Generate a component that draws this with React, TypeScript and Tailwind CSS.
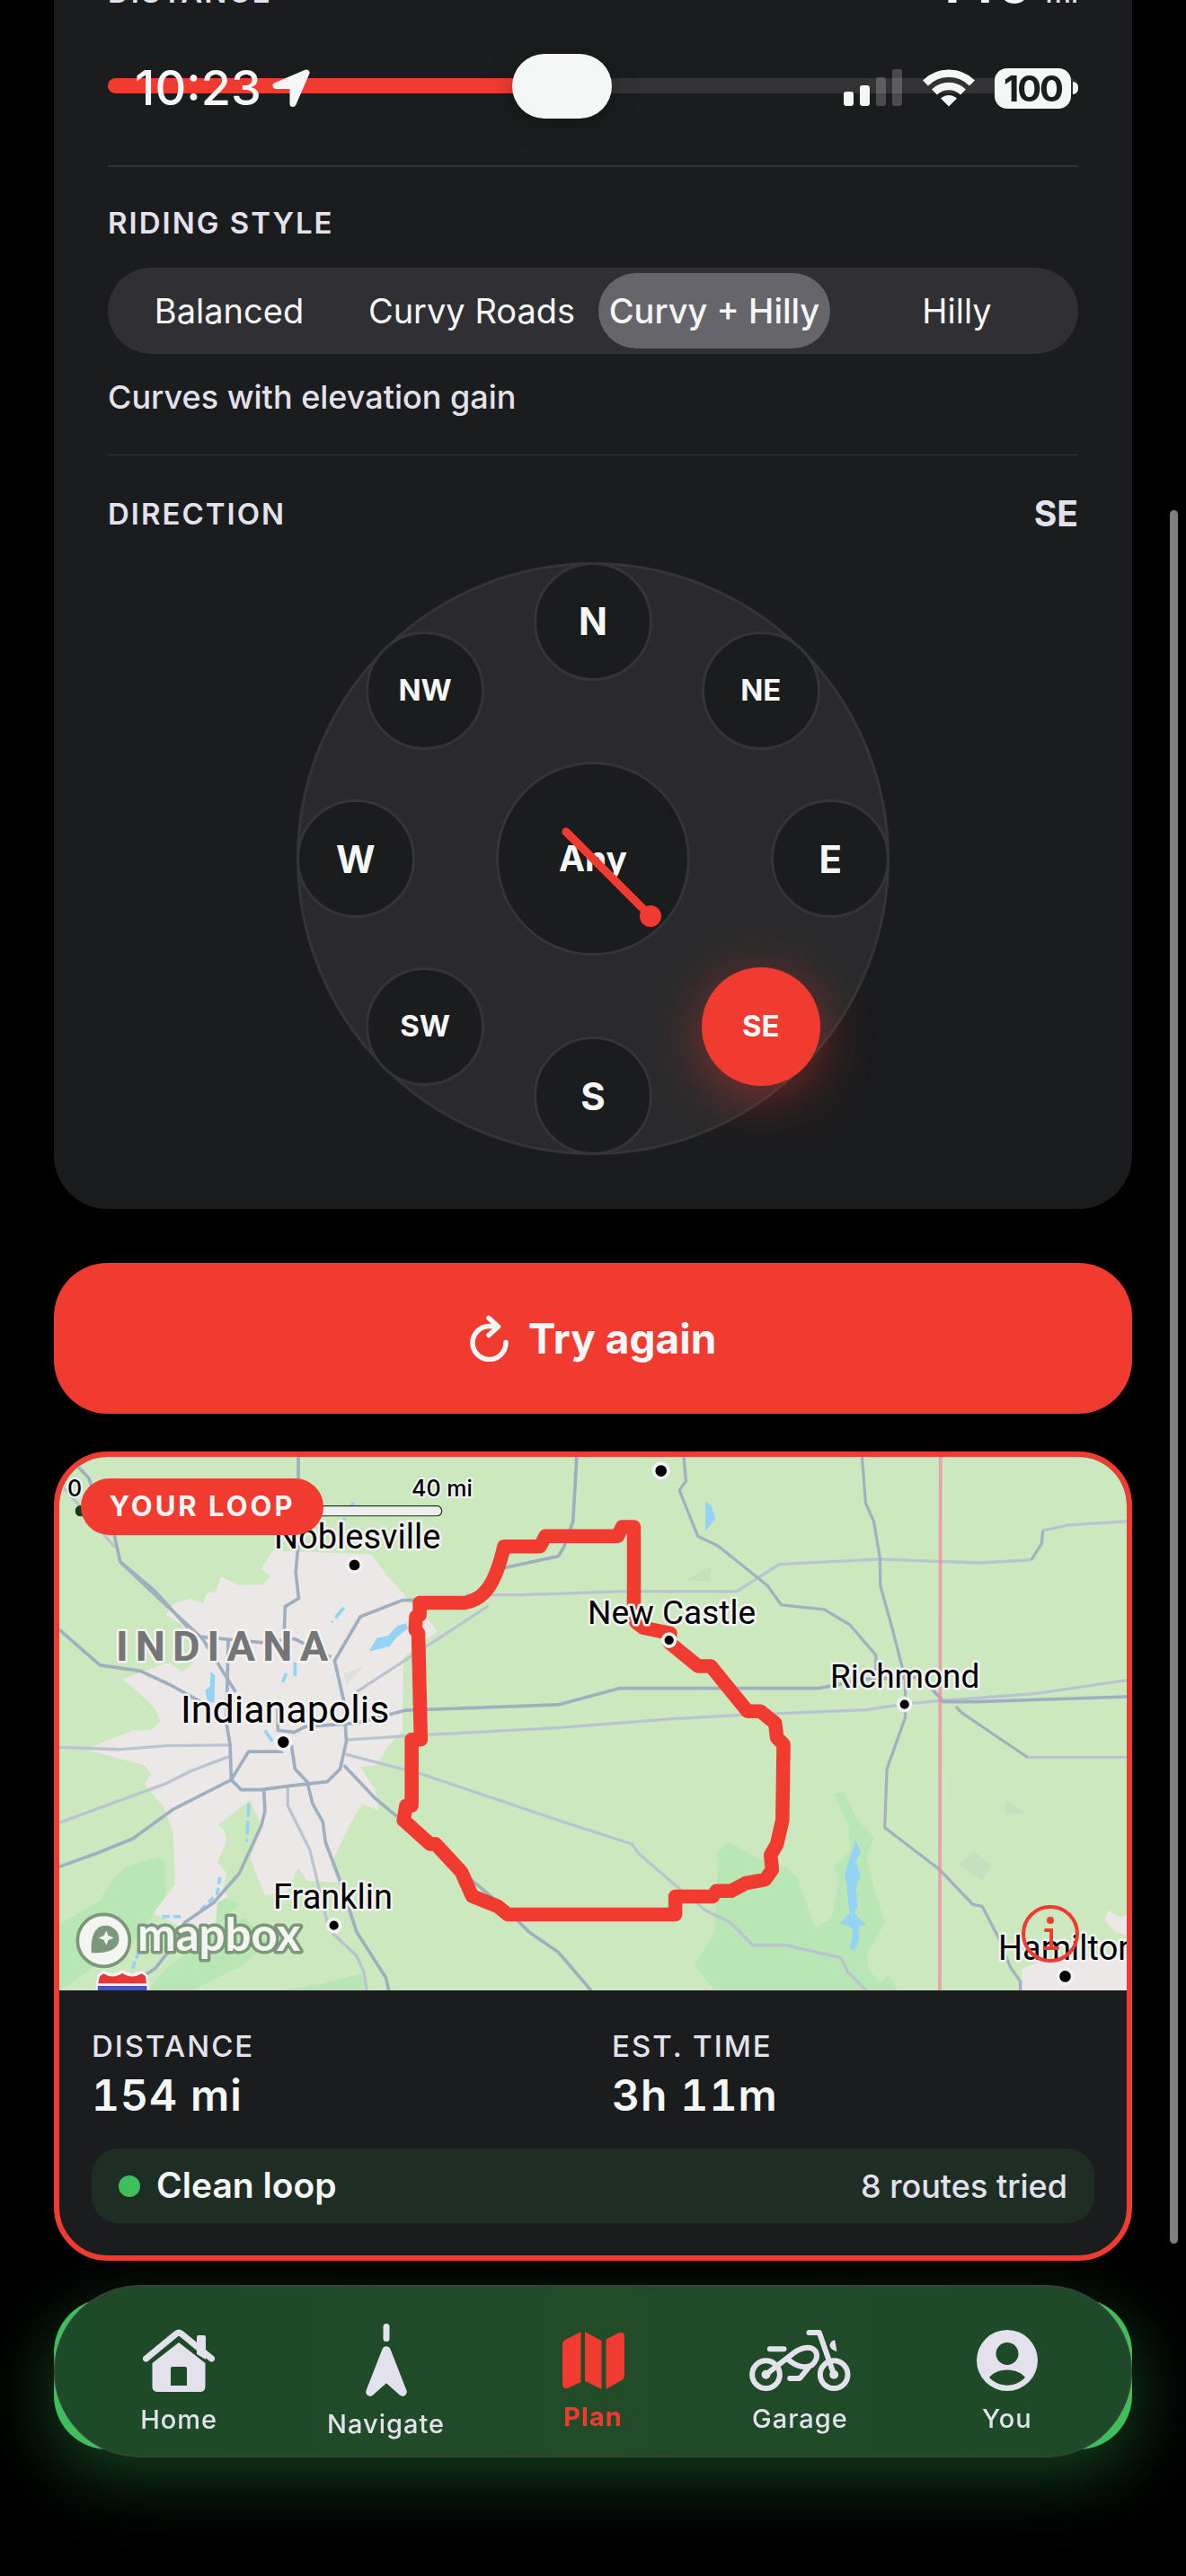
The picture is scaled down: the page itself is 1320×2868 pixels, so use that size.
import type { ReactNode } from "react";
import clsx from "clsx";

const styles = ["Balanced", "Curvy Roads", "Curvy + Hilly", "Hilly"];
const directions = ["N", "NE", "E", "SE", "S", "SW", "W", "NW"];

const StatusBar = () => (
  <div className="fixed inset-x-0 top-0 z-30 flex h-[196px] items-center justify-between pl-[150px] pr-[120px] text-[#f5f7f7]">
    <div className="flex items-center gap-[12px]">
      <span className="text-[54px] font-medium leading-[60px]">10:23</span>
      <svg width="43" height="43" viewBox="0 0 43 43" fill="currentColor">
        <path
          d="M38 4 4 18.500H23V38.500Z"
          stroke="currentColor"
          strokeWidth="7"
          strokeLinejoin="round"
        />
      </svg>
    </div>
    <div className="flex items-center">
      <svg width="66" height="44" viewBox="0 0 66 44" fill="currentColor">
        <rect x="0" y="26" width="11" height="16" rx="3" />
        <rect x="18" y="19" width="11" height="23" rx="3" />
        <rect x="36" y="10" width="11" height="32" rx="3" opacity="0.22" />
        <rect x="54" y="1" width="11" height="41" rx="3" opacity="0.22" />
      </svg>
      <svg className="ml-[22px]" width="58" height="44" viewBox="0 0 58 44">
        <g fill="none" stroke="currentColor" strokeWidth="8.500">
          <path d="M3 16.500A37 37 0 0 1 55 16.500" />
          <path d="M13 26.500A23 23 0 0 1 45 26.500" />
        </g>
        <path d="M29 42.500 20 33.500A13 13 0 0 1 38 33.500Z" fill="currentColor" />
      </svg>
      <div className="ml-[22px] flex h-[45px] w-[85px] items-center justify-center rounded-[14px] bg-[#f5f7f7] text-[40px] font-bold leading-[45px] tracking-tighter text-[#1c1d1f]">
        100
      </div>
      <div className="ml-[2px] h-[14px] w-[6px] rounded-r-full bg-[#f5f7f7]" />
    </div>
  </div>
);

const Label = ({ children }: { children: ReactNode }) => (
  <h2 className="text-[33px] font-semibold leading-[40px] tracking-[2px] text-[#e3e2ec]">{children}</h2>
);

const Compass = () => (
  <div className="relative mx-auto mt-[34px] aspect-square w-[660px] rounded-full border-[3px] border-[#353538] bg-[#2a2a2c]">
    <button className="absolute left-1/2 top-1/2 size-[216px] -translate-x-1/2 -translate-y-1/2 rounded-full border-[3px] border-[#353538] bg-[#1b1c1e] text-[39px] font-bold text-[#f5f7f7]">
      Any
    </button>
    {directions.map((name, i) => {
      const angle = (i * Math.PI) / 4;
      return (
        <button
          key={name}
          aria-pressed={name === "SE"}
          style={{
            left: `${50 + 40.4 * Math.sin(angle)}%`,
            top: `${50 - 40.4 * Math.cos(angle)}%`,
          }}
          className={clsx(
            "absolute size-[132px] -translate-x-1/2 -translate-y-1/2 rounded-full font-bold text-[#f5f7f7]",
            name.length > 1 ? "text-[33px]" : "text-[42px]",
            name === "SE"
              ? "bg-[#f23b30] shadow-[0_12px_60px_rgba(243,59,48,0.45)]"
              : "border-[3px] border-[#353538] bg-[#1b1c1e]"
          )}
        >
          {name}
        </button>
      );
    })}
    {/* Needle */}
    <svg
      className="pointer-events-none absolute left-1/2 top-1/2 size-[216px] -translate-x-1/2 -translate-y-1/2"
      viewBox="-108 -108 216 216"
    >
      <path d="M-30-30 63 63" stroke="#f23b30" strokeWidth="9" strokeLinecap="round" />
      <circle cx="64" cy="64" r="12" fill="#f23b30" />
    </svg>
  </div>
);

/* City labels, in map pixels */
const cities = [
  { name: "Noblesville", x: 239, y: 102, size: 38 },
  { name: "Indianapolis", x: 135, y: 296, size: 43 },
  { name: "Franklin", x: 238, y: 503, size: 38 },
  { name: "New Castle", x: 588, y: 186, size: 37 },
  { name: "Richmond", x: 858, y: 257, size: 37 },
  { name: "Hamilton", x: 1045, y: 560, size: 38 },
];

const LoopMap = () => (
  <svg className="block aspect-[2/1] w-full bg-[#cbe8be]" viewBox="0 0 1188 594" preserveAspectRatio="xMidYMid slice">
    <g transform="translate(-16 -22) scale(0.408163)" fill="none" strokeLinejoin="round">
      {/* Parks */}
      <g fill="#b9e6b5">
        <path d="M39 1330 90 1300 150 1265 185 1205 225 1170 310 1145 328 1160V1250L280 1330 230 1390 140 1440 39 1510Z" />
        <path d="M480 1250 530 1275 500 1300 470 1340 545 1310 610 1380 540 1440 400 1510H280L330 1450 400 1400Z" />
        <path d="M640 1510 760 1490 865 1462 875 1510Z" />
        <g transform="translate(1446 0)">
          <path d="M420 1105 500 1150 570 1170 605 1200 655 1340 700 1310 720 1200 705 1175 750 1130 745 1060 705 970H735L765 1040 815 1090 795 1150 820 1250 845 1325 795 1410 800 1450 830 1490 855 1465 880 1510H380L325 1440 380 1350 390 1130Z" />
          <path d="M300 392 368 353V392ZM1175 990 1232 1028 1173 1026ZM1045 1165 1085 1130 1135 1165 1110 1210Z" fill="#c6e0bd" />
        </g>
      </g>
      {/* Built-up areas */}
      <path
        fill="#ece8e8"
        d="M620 310 590 360 615 380 595 403H525L480 380 465 420 440 427 430 455 395 440 350 455 330 485 370 510 395 545 420 590 400 620 375 640 335 615 210 660 250 690 300 740 315 775 290 800 240 800 140 840 115 853 270 895 290 920 270 945 325 1010 350 1080 355 1220 295 1300 370 1335 465 1345 470 1270 500 1255 485 1235 495 1190 470 1160 495 1100 490 1075 472 1057 560 990 590 1060 560 1150 600 1250 660 1240 690 1175 715 1210 800 1215 780 1165 830 1060 865 1000 910 1018 900 960 860 900 905 895 930 850 975 800 978 600 1070 530 1040 490 1010 470 980 430 930 375 890 320Z"
      />
      <path
        fill="#ece8e8"
        d="M2660 1510 2665 1450 2710 1430 2800 1420 2960 1410V1360L2920 1350 2890 1320 2900 1290 2930 1310 2960 1300V1510Z"
      />
      <path fill="#dce2d5" d="M815 645 868 626 820 680Z" />
      {/* Water */}
      <g fill="#94d3f4">
        <path d="M884 585 905 548 935 542 960 515 985 508 990 522 960 545 940 570ZM452 640 464 650 462 725 443 722 437 690 450 680Z" />
        <path d="M1801 177 1816 185 1829 222 1801 257ZM2211 1100 2224 1130 2211 1160 2224 1195 2211 1230 2216 1280 2208 1300 2238 1330 2218 1335 2221 1370 2208 1400 2194 1395 2204 1350 2196 1335 2166 1328 2194 1300 2186 1220 2180 1190 2191 1160Z" />
      </g>
      <g stroke="#94d3f4" strokeWidth="9">
        <path d="M842 178 815 225 808 290M815 465 783 505M682 615V655M658 645 648 668M600 800 620 830M556 1000 550 1105" strokeDasharray="36 12" />
        <path d="M477 1200 470 1245 425 1290M370 1308H315M295 1325 270 1350 250 1420 235 1460" strokeDasharray="20 10" />
      </g>
      {/* Minor roads */}
      <g stroke="#bac3d0" strokeWidth="8">
        <path d="M39 125 110 205 190 300M39 846 200 852 330 842 505 840M39 1052 330 945 400 910 505 870M662 950V1005L722 1125 745 1220 775 1345 850 1415 870 1460 878 1510" />
        <path d="M820 826 1040 812 1400 793 1720 768 1900 758 2240 744 2344 728 2450 718 2700 700 2950 663" />
        <path d="M820 865 1030 920 1400 1045 1600 1110 1620 1137 1730 1232 1800 1290 1870 1325 1930 1386H2020L2170 1420 2190 1460 2240 1510" />
        <path d="M850 695 1210 460M1150 430H1300L1568 421H1886L2002 347 2276 333 2550 343 2690 335M2720 255 2790 240 2950 230M2680 874H2950" />
      </g>
      {/* Highways */}
      <g stroke="#a0afc0" strokeWidth="9">
        <path d="M80 70 118 110 190 270 205 340 300 430 430 550 498 660 520 695M205 340 300 420 390 520M39 525 150 622 260 638 340 675 430 725" />
        <path d="M691 54V290L684 370 692 440 655 462 652 550M1450 54 1440 230 1415 300 1400 325 1250 357 1180 425" />
        <path d="M1010 445H975L860 490 790 610 815 720 822 830 805 905 770 940 660 952 590 962H535L508 935 505 840 495 780 500 550M425 545 590 560 680 550 780 600M508 935 555 858H650M39 1172 150 1132 240 1095 350 1015 508 935" />
        <path d="M597 962 600 1020 590 1060 530 1190 460 1270 380 1325 340 1400 300 1450 270 1470M672 840 682 905 715 940 730 1000 758 1050 765 1105 805 1210 850 1350 930 1475 938 1510" />
        <path d="M635 740V800L680 805 710 790 850 780 985 745 1400 730 1568 685H2110L2240 660 2390 655 2450 722H2540L2950 708" />
        <path d="M815 895 900 985 960 1035M1160 1205 1260 1290 1320 1350 1400 1405 1490 1510" />
      </g>
      <g stroke="#a4b0c0" strokeWidth="8">
        <path d="M1742 54 1748 120 1730 145 1780 270 1836 297 1970 405 2008 458 2125 470 2195 512 2266 595V640" />
        <path d="M2228 54 2238 180 2260 230 2277 330 2278 405 2310 520 2346 660V765L2296 905 2290 1065 2440 1180 2530 1275 2556 1280 2600 1365 2632 1445 2660 1485V1510M2690 335 2718 290 2721 255M2484 735 2500 752 2680 874" />
      </g>
      <path d="M2442 54 2440 1510" stroke="#f28ba4" strokeWidth="9" opacity="0.75" />
      {/* Route */}
      <path
        stroke="#f23b30"
        strokeWidth="38"
        d="M1022 485V452H1145Q1180 445 1200 422C1225 395 1240 350 1252 298H1350L1365 270H1562L1574 245H1606V460L1612 505 1631 520 1705 535 1702 560 1781 625H1816L1916 748H1951L1991 780 1996 820 2014 838 2011 1045 1996 1110 1979 1140 1983 1180 1964 1207 1911 1217 1871 1238H1831L1821 1253H1719V1302H1262L1235 1280 1165 1252 1135 1185 1065 1110H1050L978 1045 985 1005H1000V825H1025L1018 535 1010 525 1012 490Z"
      />
      {/* Town dots */}
      {[
        [844, 349, 15],
        [650, 832, 16],
        [788, 1332, 13],
        [1680, 92, 16],
        [1702, 554, 13],
        [2344, 729, 13],
        [2782, 1471, 16],
      ].map(([cx, cy, r]) => (
        <circle key={cx} cx={cx} cy={cy} r={r + 4} fill="#000" stroke="#f2f2f2" strokeWidth="9" />
      ))}
      {/* Scale bar */}
      <rect x="84" y="188" width="998" height="27" rx="13" fill="#efefef" stroke="#143a17" strokeWidth="3" />
      <rect x="84" y="188" width="300" height="27" rx="13" fill="#143a17" />
      {/* Highway shield */}
      <path d="M138 1512 142 1468 158 1455 185 1464 211 1454 238 1464 265 1455 281 1468 284 1512Z" fill="#f4f4f4" />
      <path d="M145 1490 150 1470 160 1463Q186 1480 211 1462 236 1480 264 1463L274 1470 277 1490Z" fill="#e43a3a" />
      <path d="M144 1497H278V1512H144Z" fill="#4257c4" />
      {/* Logo mark */}
      <circle cx="160" cy="1373" r="71" fill="#f3f5f1" stroke="#7b987a" strokeWidth="9" />
      <path d="M127 1407C124 1360 137 1332 166 1332A37 37 0 0 1 202 1369C202 1397 172 1409 127 1407Z" fill="#7b987a" />
      <path d="M167 1346 173 1360 188 1366 173 1372 167 1386 161 1372 146 1366 161 1360Z" fill="#f3f5f1" />
    </g>
    <g fontFamily="Roboto, sans-serif" stroke="#f2f2f2" strokeWidth="5" strokeLinejoin="round" paintOrder="stroke">
      {cities.map((city) => (
        <text key={city.name} x={city.x} y={city.y} fontSize={city.size}>
          {city.name}
        </text>
      ))}
      <text x="63" y="227" fontSize="47" fontWeight="700" letterSpacing="8" fill="#757575">
        INDIANA
      </text>
    </g>
    <g fontFamily="Inter, sans-serif" fontSize="25" fontWeight="500" stroke="#f2f2f2" strokeWidth="4" paintOrder="stroke">
      <text x="9" y="44">
        0
      </text>
      <text x="392" y="44">
        40 mi
      </text>
    </g>
    <text
      x="87"
      y="550"
      fontFamily="Lato, sans-serif"
      fontSize="51"
      fontWeight="700"
      fill="#f3f5f1"
      stroke="#7b987a"
      strokeWidth="7"
      strokeLinejoin="round"
      paintOrder="stroke"
    >
      mapbox
    </text>
    <g transform="translate(1103 531)" stroke="#f23b30" strokeWidth="4" strokeLinecap="round" fill="none">
      <circle r="30" />
      <path d="M-5-4H1V16M-6 16H8" />
      <circle cy="-15" r="2" fill="#f23b30" />
    </g>
  </svg>
);

const Stat = ({ label, value }: { label: string; value: string }) => (
  <div className="flex-1">
    <p className="text-[33px] font-medium leading-[40px] tracking-[2px] text-[#e3e2ec]">{label}</p>
    <p className="mt-[7px] text-[48px] font-semibold leading-[56px] tracking-[1px] tabular-nums text-[#f5f7f7]">
      {value}
    </p>
  </div>
);

const HomeIcon = () => (
  <svg width="80" height="70" viewBox="0 0 80 70" fill="currentColor">
    <path d="M60 28V9Q60 7 62 7H68Q70 7 70 9V34Z" />
    <path d="M3.500 33 37 5.500Q40 2.500 43 5.500L76.500 33" fill="none" stroke="currentColor" strokeWidth="7" strokeLinecap="round" />
    <path
      fillRule="evenodd"
      d="M40 15 69.500 38V64Q69.500 70 63 70H17Q10.500 70 10.500 64V38ZM31 44V63H49V44Q49 42 47 42H33Q31 42 31 44Z"
    />
  </svg>
);

const NavigateIcon = () => (
  <svg width="46" height="81" viewBox="0 0 46 81" fill="currentColor">
    <rect x="19.500" width="7" height="20" rx="3.500" />
    <path d="M23 30 5 76 23 60 41 76Z" stroke="currentColor" strokeWidth="9.500" strokeLinejoin="round" />
  </svg>
);

const PlanIcon = () => (
  <svg width="69" height="64" viewBox="0 0 69 64" fill="currentColor">
    <path d="M20.500 0V56L7 62.500Q0 65 0 58V15Q0 11 3 9Z" />
    <path d="M25 0 43.500 10V64L25 55Z" />
    <path d="M48.500 8.500 62 1.500Q69-1 69 6V48Q69 52 66 54L48.500 64Z" />
  </svg>
);

const GarageIcon = () => (
  <svg width="113" height="68" viewBox="42 45 338 204" fill="none" stroke="currentColor" strokeWidth="18" strokeLinecap="round" strokeLinejoin="round">
    <circle cx="97" cy="194" r="46" />
    <circle cx="324" cy="194" r="46" />
    <circle cx="97" cy="194" r="6" />
    <circle cx="324" cy="194" r="6" />
    <path d="M97 194 190 122C222 98 252 100 263 117 272 134 262 152 250 163 228 174 198 168 172 145" />
    <path d="M110 109H157M241 54H275L324 194M177 207H210L238 172" />
    <path d="M327 78Q309 84 310 99 314 112 334 117Z" fill="currentColor" stroke="none" />
  </svg>
);

const YouIcon = () => (
  <svg width="68" height="68" viewBox="0 0 68 68" fill="currentColor">
    <path
      fillRule="evenodd"
      d="M34 0A34 34 0 1 1 34 68 34 34 0 0 1 34 0ZM34 14A12 12 0 1 0 34 39 12 12 0 0 0 34 14ZM34 44.500C25 44.500 18 48 14 53 25 64.500 43 64.500 54 53 50 48 43 44.500 34 44.500Z"
    />
  </svg>
);

const tabs = [
  { name: "Home", icon: <HomeIcon /> },
  { name: "Navigate", icon: <NavigateIcon /> },
  { name: "Plan", icon: <PlanIcon />, active: true },
  { name: "Garage", icon: <GarageIcon /> },
  { name: "You", icon: <YouIcon /> },
];

const TabBar = () => (
  <nav className="fixed inset-x-[60px] bottom-[132px] z-20 flex h-[192px] items-center rounded-full border-2 border-[#37423b] bg-linear-to-r from-[#1d4a28] via-[#224b28] to-[#1d4a28] px-[22px] pt-[24px]">
    {tabs.map((tab) => (
      <a
        key={tab.name}
        href="#"
        className={clsx(
          "flex flex-1 flex-col items-center gap-[13px] text-[29px] leading-[36px] tracking-[1px]",
          tab.active ? "font-bold text-[#f23b30]" : "font-medium text-[#e3e2ec]"
        )}
      >
        {tab.icon}
        {tab.name}
      </a>
    ))}
  </nav>
);

export default function App() {
  return (
    <div className="relative min-h-screen overflow-hidden bg-black font-[Inter,sans-serif]">
      <StatusBar />

      <main className="-mt-[29px] px-[60px] pb-[141px]">
        <section className="rounded-b-[60px] bg-[#1b1c1e] px-[60px] pb-[60px]">
          <div className="flex h-[40px] items-baseline justify-between">
            <Label>DISTANCE</Label>
            <p className="text-[60px] font-bold leading-[20px] text-[#f5f7f7]">
              140 <span className="text-[32px] font-medium text-[#e3e2ec]">mi</span>
            </p>
          </div>
          <input
            type="range"
            aria-label="Distance"
            min={0}
            max={1000}
            defaultValue={464}
            className="mt-[76px] block h-[17px] w-full appearance-none rounded-full bg-linear-to-r from-[#f23b30] from-50% to-[#333335] to-50% [&::-webkit-slider-thumb]:h-[72px] [&::-webkit-slider-thumb]:w-[111px] [&::-webkit-slider-thumb]:appearance-none [&::-webkit-slider-thumb]:rounded-[36px] [&::-webkit-slider-thumb]:bg-[#f5f7f7] [&::-webkit-slider-thumb]:shadow-[0_6px_30px_rgba(0,0,0,0.25)]"
          />

          <div className="mt-[80px] border-t-2 border-[#353538] pt-[42px]">
            <Label>RIDING STYLE</Label>
            <div className="mt-[30px] grid h-[96px] grid-cols-4 rounded-full bg-[#302f33] py-[6px]">
              {styles.map((name) => (
                <button
                  key={name}
                  aria-pressed={name === "Curvy + Hilly"}
                  className={clsx(
                    "mx-[6px] whitespace-nowrap rounded-full text-[38px] text-[#f5f7f7]",
                    name === "Curvy + Hilly" ? "bg-[#66656b] font-medium" : "font-normal"
                  )}
                >
                  {name}
                </button>
              ))}
            </div>
            <p className="mt-[24px] text-[36px] font-medium leading-[48px] text-[#e3e2ec]">
              Curves with elevation gain
            </p>
          </div>

          <div className="mt-[40px] border-t border-[#353538] pt-[45px]">
            <div className="flex items-center justify-between">
              <Label>DIRECTION</Label>
              <span className="text-[39px] font-bold leading-[40px] text-[#e3e2ec]">SE</span>
            </div>
            <Compass />
          </div>
        </section>

        <button className="mt-[60px] flex h-[168px] w-full items-center justify-center gap-[22px] rounded-[60px] bg-[#f23b30] text-[46px] font-bold text-[#f5f7f7]">
          <svg
            width="43"
            height="52"
            viewBox="0 0 43 52"
            fill="none"
            stroke="currentColor"
            strokeWidth="5.500"
            strokeLinecap="round"
            strokeLinejoin="round"
          >
            <path d="M40 30.500A18.500 18.500 0 1 1 21.500 12.500H31M21 3.500 31.500 13 21 22.500" />
          </svg>
          Try again
        </button>

        <section className="relative mt-[42px] overflow-hidden rounded-[60px] border-[6px] border-[#f23b30] bg-[#1b1c1e]">
          <LoopMap />
          <span className="absolute left-[24px] top-[24px] flex h-[63px] w-[270px] items-center justify-center rounded-full bg-[#f23b30] text-[31px] font-bold tracking-[3px] text-[#f5f7f7]">
            YOUR LOOP
          </span>
          <div className="px-[36px] pb-[36px] pt-[42px]">
            <div className="flex gap-[42px]">
              <Stat label="DISTANCE" value="154 mi" />
              <Stat label="EST. TIME" value="3h 11m" />
            </div>
            <div className="mt-[31px] flex h-[83px] items-center rounded-[30px] bg-[#1f2e25] px-[30px]">
              <span className="size-[24px] rounded-full bg-[#3fbf5c]" />
              <span className="ml-[18px] text-[39px] font-semibold text-[#f5f7f7]">Clean loop</span>
              <span className="ml-auto text-[36px] font-medium text-[#e3e2ec]">8 routes tried</span>
            </div>
          </div>
        </section>

        <div className="mt-[42px] h-[168px] rounded-[60px] bg-[#3fbf5c] shadow-[0_24px_84px_rgba(63,191,92,0.38)]" />
      </main>

      <TabBar />

      {/* Scroll indicator */}
      <div className="fixed bottom-[370px] right-[9px] top-[568px] z-10 w-[9px] rounded-full bg-[#808080]" />
    </div>
  );
}
